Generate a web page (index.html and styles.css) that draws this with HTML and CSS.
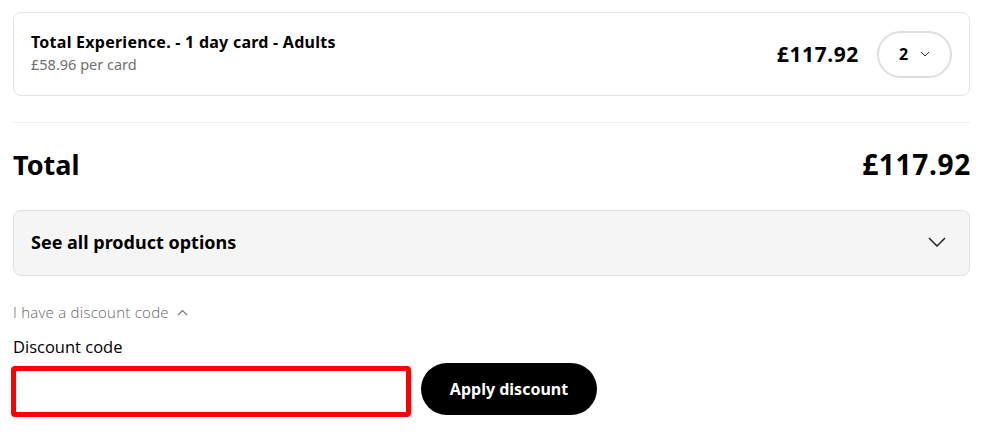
FILE: index.html
```html
<!DOCTYPE html>
<html lang="en">
<head>
<meta charset="utf-8">
<title>Basket</title>
<link rel="stylesheet" href="styles.css">
</head>
<body>
<main class="basket">
  <section class="line-card">
    <div class="line-info">
      <div class="line-title">Total Experience. - 1 day card - Adults</div>
      <div class="line-sub">£58.96 per card</div>
    </div>
    <div class="line-right">
      <div class="line-price">£117.92</div>
      <button class="qty" type="button">
        <span class="qty-num">2</span>
        <svg class="qty-chev" width="10" height="6" viewBox="0 0 10 6"><path d="M1 1l4 4 4-4" fill="none" stroke="#333" stroke-width="1"/></svg>
      </button>
    </div>
  </section>

  <hr class="divider">

  <div class="total-row">
    <div class="total-label">Total</div>
    <div class="total-value">£117.92</div>
  </div>

  <button class="options" type="button">
    <span>See all product options</span>
    <svg class="options-chev" width="18" height="10" viewBox="0 0 18 10"><path d="M1 1l8 8 8-8" fill="none" stroke="#222" stroke-width="1.5"/></svg>
  </button>

  <div class="discount-toggle">
    <span>I have a discount code</span>
    <svg class="toggle-chev" width="11" height="7" viewBox="0 0 11 7"><path d="M1 6l4.5-4.5L10 6" fill="none" stroke="#777" stroke-width="1.2"/></svg>
  </div>

  <label class="discount-label" for="code">Discount code</label>
  <div class="discount-row">
    <input id="code" class="discount-input" type="text">
    <button class="apply" type="button">Apply discount</button>
  </div>
</main>
</body>
</html>
```

FILE: styles.css
```css
* { box-sizing: border-box; }
body {
  margin: 0;
  background: #fff;
  font-family: "Noto Sans", "Open Sans", sans-serif;
  color: #000;
}
.basket {
  width: 957px;
  margin-left: 13px;
  padding-top: 12px;
}
.line-card {
  height: 84px;
  border: 1px solid #e3e3e3;
  border-radius: 8px;
  padding: 0 17px;
  display: flex;
  align-items: center;
  justify-content: space-between;
}
.line-info { display: flex; flex-direction: column; gap: 3px; margin-top: -4px; }
.line-title { font-size: 16px; font-weight: 700; line-height: 20px; letter-spacing: 0.25px; }
.line-sub { font-size: 14.5px; color: #6f6f6f; line-height: 18px; }
.line-right { display: flex; align-items: center; gap: 18px; }
.line-price { font-size: 21px; font-weight: 700; letter-spacing: 0.6px; }
.qty {
  width: 75px;
  height: 47px;
  border: 2px solid #dedede;
  border-radius: 24px;
  background: #fff;
  display: flex;
  align-items: center;
  justify-content: center;
  gap: 12px;
  padding: 0;
  font-family: inherit;
}
.qty-num { font-size: 16px; font-weight: 700; }
.divider {
  border: 0;
  border-top: 1px solid #eeeeee;
  margin: 26px 0 0;
}
.total-row {
  display: flex;
  justify-content: space-between;
  align-items: center;
  height: 82px;
}
.total-label { font-size: 27px; font-weight: 700; }
.total-value { font-size: 28px; font-weight: 700; letter-spacing: 0.7px; margin-right: -1px; }
.options {
  width: 100%;
  height: 66px;
  background: #f5f5f5;
  border: 1px solid #e0e0e0;
  border-radius: 8px;
  display: flex;
  align-items: center;
  justify-content: space-between;
  padding: 0 23px 2px 17px;
  font-family: inherit;
  font-size: 18px;
  font-weight: 700;
  color: #000;
  margin-top: 5px;
}
.discount-toggle {
  margin-top: 26px;
  display: flex;
  align-items: center;
  gap: 8px;
  font-family: "Open Sans", sans-serif;
  font-weight: 300;
  font-size: 15px;
  letter-spacing: 0.25px;
  color: #666;
}
.discount-label {
  display: block;
  margin-top: 13px;
  font-family: "Open Sans", sans-serif;
  font-size: 16.5px;
  color: #000;
}
.discount-row {
  display: flex;
  align-items: center;
  gap: 10px;
  margin-top: 8px;
}
.discount-input {
  width: 400px;
  height: 51px;
  border: 5px solid #ff0000;
  border-radius: 4px;
  margin-left: -2px;
  outline: none;
}
.apply {
  width: 176px;
  height: 52px;
  border: 0;
  border-radius: 26px;
  background: #000;
  color: #fff;
  font-family: inherit;
  font-size: 16px;
  font-weight: 700;
  margin-top: -6px;
}
```
